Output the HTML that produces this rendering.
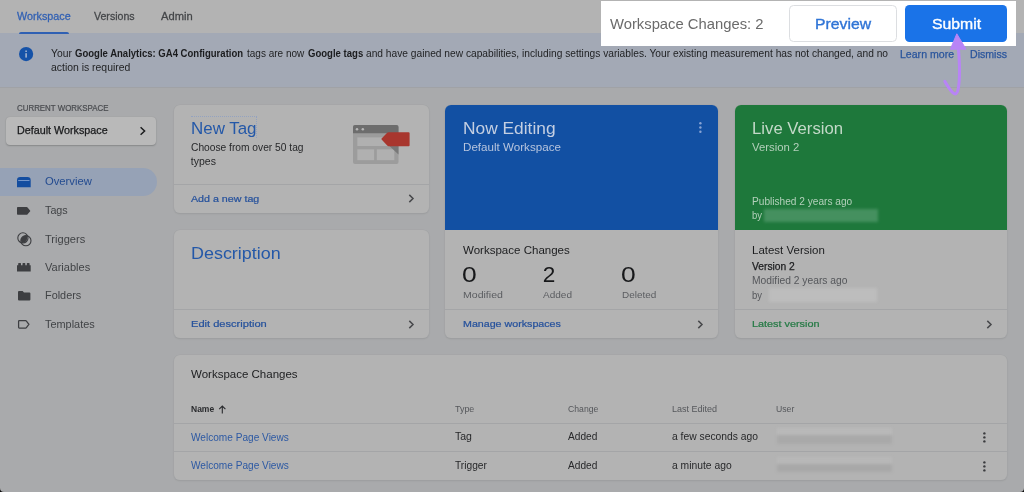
<!DOCTYPE html>
<html lang="en"><head><meta charset="utf-8"><title>Google Tag Manager</title>
<style>
*{box-sizing:border-box;margin:0;padding:0}
html,body{width:1024px;height:492px;overflow:hidden}
body{position:relative;background:#a9aaac;font-family:"Liberation Sans",Arial,sans-serif;-webkit-font-smoothing:antialiased}
.abs{position:absolute}
.t{position:absolute;white-space:nowrap;display:block;filter:blur(.3px);transform-origin:0 50%}
#topbar{left:0;top:0;width:1024px;height:33.5px;background:#b3b3b3}
#tabline{left:19px;top:31.5px;width:50px;height:2.2px;background:#2f60b3;border-radius:2px 2px 0 0}
#banner{left:0;top:33px;width:1024px;height:54.5px;background:#a3a9b5}
#bannerline{left:0;top:87px;width:1024px;height:1px;background:#a0a2a6}
.card{position:absolute;background:#b3b3b3;border-radius:6px;box-shadow:0 0 0 .6px #a3a4a6, 0 1px 1.5px rgba(60,64,67,.18)}
.hr{position:absolute;height:1px;background:#a4a5a7}
#wsbox{left:5.7px;top:116.8px;width:150.5px;height:28px;background:#b9b9b9;border-radius:4px;box-shadow:0 1px 1.5px rgba(40,42,45,.25),0 0 1px rgba(40,42,45,.15)}
#pill{left:0;top:167.5px;width:156.5px;height:28px;background:#96a2b6;border-radius:0 14px 14px 0}
#hl{left:600.8px;top:1.4px;width:415.2px;height:44.2px;background:#fff}
#pvbtn{left:788.9px;top:5.2px;width:107.9px;height:37px;background:#fff;border:1px solid #dcdee1;border-radius:4.5px}
#sbbtn{left:905px;top:4.9px;width:102px;height:37.4px;background:#1a73e8;border-radius:4.5px}
.blur{position:absolute;filter:blur(1.6px)}
svg{position:absolute;overflow:visible}

#t_ws{left:17px;top:10.34px;font-size:10.7px;line-height:13.9px;font-weight:400;color:#3160b3;transform:scaleX(1.0071);-webkit-text-stroke:0.26px #3160b3}
#t_ver{left:93.5px;top:10.34px;font-size:10.7px;line-height:13.9px;font-weight:400;color:#444649;transform:scaleX(0.9913);-webkit-text-stroke:0.26px #444649}
#t_adm{left:161px;top:10.34px;font-size:10.7px;line-height:13.9px;font-weight:400;color:#444649;transform:scaleX(1.0444);-webkit-text-stroke:0.26px #444649}
#b_lm{left:899.5px;top:47.55px;font-size:10.3px;line-height:13.4px;font-weight:400;color:#2a559c;transform:scaleX(1.0259);-webkit-text-stroke:0.25px #2a559c}
#b_dm{left:969.6px;top:47.55px;font-size:10.3px;line-height:13.4px;font-weight:400;color:#2a559c;transform:scaleX(1.0269);-webkit-text-stroke:0.25px #2a559c}
#b_s1{left:51.3px;top:47.15px;font-size:10.3px;line-height:13.4px;font-weight:400;color:#222325;transform:scaleX(1.0003)}
#b_s2{left:74.9px;top:47.15px;font-size:10.3px;line-height:13.4px;font-weight:700;color:#1b1c1e;transform:scaleX(0.9260)}
#b_s3{left:246.6px;top:47.15px;font-size:10.3px;line-height:13.4px;font-weight:400;color:#222325;transform:scaleX(0.9720)}
#b_s4{left:307.5px;top:47.15px;font-size:10.3px;line-height:13.4px;font-weight:700;color:#1b1c1e;transform:scaleX(0.9280)}
#b_s5{left:366.3px;top:47.15px;font-size:10.3px;line-height:13.4px;font-weight:400;color:#222325;transform:scaleX(0.9912)}
#b_l2{left:51.3px;top:61.35px;font-size:10.3px;line-height:13.4px;font-weight:400;color:#222325;transform:scaleX(1.0114)}
#s_cw{left:17px;top:103.22px;font-size:8.6px;line-height:11.2px;font-weight:400;color:#4a4c50;transform:scaleX(0.9199);-webkit-text-stroke:0.21px #4a4c50}
#s_dw{left:17px;top:123.83px;font-size:10.6px;line-height:13.8px;font-weight:400;color:#18191b;transform:scaleX(1.0148);-webkit-text-stroke:0.25px #18191b}
#n_ov{left:45.1px;top:175.31px;font-size:10.5px;line-height:13.7px;font-weight:400;color:#234b90;transform:scaleX(1.0700)}
#n_tg{left:44.9px;top:203.80px;font-size:10.5px;line-height:13.7px;font-weight:400;color:#414346;transform:scaleX(1.0245)}
#n_tr{left:44.9px;top:232.50px;font-size:10.5px;line-height:13.7px;font-weight:400;color:#414346;transform:scaleX(1.0552)}
#n_va{left:44.9px;top:260.60px;font-size:10.5px;line-height:13.7px;font-weight:400;color:#414346;transform:scaleX(1.0519)}
#n_fo{left:44.9px;top:289.15px;font-size:10.5px;line-height:13.7px;font-weight:400;color:#414346;transform:scaleX(1.0347)}
#n_te{left:44.9px;top:317.50px;font-size:10.5px;line-height:13.7px;font-weight:400;color:#414346;transform:scaleX(1.0391)}
#c1_t{left:190.5px;top:116.75px;font-size:17.2px;line-height:22.4px;font-weight:400;color:#2458a8;transform:scaleX(0.9845)}
#c1_a{left:190.8px;top:140.80px;font-size:10.5px;line-height:13.7px;font-weight:400;color:#27282a;transform:scaleX(0.9738)}
#c1_b{left:190.8px;top:154.90px;font-size:10.5px;line-height:13.7px;font-weight:400;color:#27282a;transform:scaleX(1.0000)}
#c1_l{left:190.8px;top:193.25px;font-size:9.5px;line-height:12.3px;font-weight:400;color:#27529c;transform:scaleX(1.1238);-webkit-text-stroke:0.23px #27529c}
#c2_t{left:190.6px;top:242.30px;font-size:17.3px;line-height:22.5px;font-weight:400;color:#2458a8;transform:scaleX(1.0380)}
#c2_l{left:190.8px;top:318.25px;font-size:9.5px;line-height:12.3px;font-weight:400;color:#27529c;transform:scaleX(1.1665);-webkit-text-stroke:0.23px #27529c}
#c3_t{left:463.0px;top:116.75px;font-size:17.2px;line-height:22.4px;font-weight:400;color:#c4cfe2;transform:scaleX(1.0089)}
#c3_s{left:463.1px;top:140.76px;font-size:10.2px;line-height:13.3px;font-weight:400;color:#b7c5de;transform:scaleX(1.1400)}
#c3_w{left:463.1px;top:241.75px;font-size:11.6px;line-height:15.1px;font-weight:400;color:#1c1d1f;transform:scaleX(0.9943)}
#c3_n0{left:462.4px;top:259.79px;font-size:22.6px;line-height:29.4px;font-weight:400;color:#17181a;transform:scaleX(1.1700)}
#c3_n1{left:542.8px;top:259.79px;font-size:22.6px;line-height:29.4px;font-weight:400;color:#17181a;transform:scaleX(1.0000)}
#c3_n2{left:621.2px;top:259.79px;font-size:22.6px;line-height:29.4px;font-weight:400;color:#17181a;transform:scaleX(1.1700)}
#c3_m{left:463.1px;top:289.19px;font-size:9.9px;line-height:12.9px;font-weight:400;color:#5b5d61;transform:scaleX(1.0687)}
#c3_a{left:542.8px;top:289.19px;font-size:9.9px;line-height:12.9px;font-weight:400;color:#5b5d61;transform:scaleX(1.0151)}
#c3_d{left:621.9px;top:289.19px;font-size:9.9px;line-height:12.9px;font-weight:400;color:#5b5d61;transform:scaleX(1.0073)}
#c3_l{left:463.1px;top:318.00px;font-size:9.5px;line-height:12.3px;font-weight:400;color:#27529c;transform:scaleX(1.1231);-webkit-text-stroke:0.23px #27529c}
#c4_t{left:752.0px;top:116.75px;font-size:17.2px;line-height:22.4px;font-weight:400;color:#c3d9c8;transform:scaleX(0.9732)}
#c4_s{left:752.1px;top:140.81px;font-size:10.2px;line-height:13.3px;font-weight:400;color:#b4d0bb;transform:scaleX(1.1113)}
#c4_p{left:752.1px;top:195.15px;font-size:10.3px;line-height:13.4px;font-weight:400;color:#b4d0bb;transform:scaleX(0.9834)}
#c4_b{left:752.1px;top:209.25px;font-size:10.3px;line-height:13.4px;font-weight:400;color:#b4d0bb;transform:scaleX(0.9199)}
#c4_lv{left:752.1px;top:241.75px;font-size:11.6px;line-height:15.1px;font-weight:400;color:#1c1d1f;transform:scaleX(0.9906)}
#c4_v2{left:752.1px;top:260.15px;font-size:10.3px;line-height:13.4px;font-weight:400;color:#1c1d1f;transform:scaleX(0.9972);-webkit-text-stroke:0.25px #1c1d1f}
#c4_m{left:752.1px;top:274.00px;font-size:10.3px;line-height:13.4px;font-weight:400;color:#55575b;transform:scaleX(0.9992)}
#c4_b2{left:752.1px;top:288.60px;font-size:10.3px;line-height:13.4px;font-weight:400;color:#55575b;transform:scaleX(0.9199)}
#c4_l{left:752.1px;top:318.00px;font-size:9.5px;line-height:12.3px;font-weight:400;color:#257a45;transform:scaleX(1.1405);-webkit-text-stroke:0.23px #257a45}
#tb_t{left:190.8px;top:368.21px;font-size:10.4px;line-height:13.5px;font-weight:400;color:#1c1d1f;transform:scaleX(1.1076)}
#th_n{left:190.8px;top:403.76px;font-size:8.7px;line-height:11.3px;font-weight:700;color:#2a2b2e;transform:scaleX(0.9768)}
#th_t{left:455.2px;top:403.76px;font-size:8.7px;line-height:11.3px;font-weight:400;color:#55575b;transform:scaleX(1.0254)}
#th_c{left:567.5px;top:403.76px;font-size:8.7px;line-height:11.3px;font-weight:400;color:#55575b;transform:scaleX(0.9962)}
#th_l{left:671.5px;top:403.76px;font-size:8.7px;line-height:11.3px;font-weight:400;color:#55575b;transform:scaleX(1.0357)}
#th_u{left:775.9px;top:403.76px;font-size:8.7px;line-height:11.3px;font-weight:400;color:#55575b;transform:scaleX(0.9988)}
#r1_n{left:190.8px;top:431.05px;font-size:10.5px;line-height:13.7px;font-weight:400;color:#2d59a3;transform:scaleX(0.9615)}
#r1_t{left:455.2px;top:430.25px;font-size:10.5px;line-height:13.7px;font-weight:400;color:#27282a;transform:scaleX(0.9996)}
#r1_c{left:567.5px;top:430.25px;font-size:10.5px;line-height:13.7px;font-weight:400;color:#27282a;transform:scaleX(0.9656)}
#r1_l{left:671.5px;top:430.25px;font-size:10.5px;line-height:13.7px;font-weight:400;color:#27282a;transform:scaleX(0.9814)}
#r2_n{left:190.8px;top:459.45px;font-size:10.5px;line-height:13.7px;font-weight:400;color:#2d59a3;transform:scaleX(0.9615)}
#r2_t{left:455.2px;top:459.35px;font-size:10.5px;line-height:13.7px;font-weight:400;color:#27282a;transform:scaleX(0.9713)}
#r2_c{left:567.5px;top:459.35px;font-size:10.5px;line-height:13.7px;font-weight:400;color:#27282a;transform:scaleX(0.9656)}
#r2_l{left:671.5px;top:459.35px;font-size:10.5px;line-height:13.7px;font-weight:400;color:#27282a;transform:scaleX(0.9821)}
#h_wc{left:610.4px;top:14.65px;font-size:14.5px;line-height:18.9px;font-weight:400;color:#6b6b6b;transform:scaleX(1.0201)}
#h_pv{left:815.3px;top:14.90px;font-size:14px;line-height:18.2px;font-weight:400;color:#2f74d6;transform:scaleX(1.1254);-webkit-text-stroke:0.34px #2f74d6}
#h_sb{left:931.8px;top:14.90px;font-size:14px;line-height:18.2px;font-weight:400;color:#ffffff;transform:scaleX(1.1276);-webkit-text-stroke:0.34px #ffffff}
</style></head>
<body>
<div class="abs" id="topbar"></div>
<div class="abs" id="banner"></div>
<div class="abs" id="bannerline"></div>
<div class="abs" id="tabline"></div>

<!-- info icon -->
<svg style="left:18.5px;top:46.7px" width="14.2" height="14.2" viewBox="0 0 14.2 14.2"><circle cx="7.1" cy="7.1" r="7.1" fill="#1552a8"/><rect x="6.4" y="6.2" width="1.4" height="4.4" fill="#b4bfd4"/><rect x="6.4" y="3.5" width="1.4" height="1.5" fill="#b4bfd4"/></svg>

<!-- sidebar -->
<div class="abs" id="wsbox"></div>
<svg style="left:139px;top:125.5px" width="8" height="10" viewBox="0 0 8 10"><path d="M1.6 1.2 L5.6 5 L1.6 8.8" fill="none" stroke="#1b1c1e" stroke-width="1.5"/></svg>
<div class="abs" id="pill"></div>
<!-- overview icon -->
<svg style="left:17.1px;top:176.8px" width="14" height="11" viewBox="0 0 14 11"><path d="M0 10.3 V3.2 Q0 0 3.2 0 H10.5 Q13.7 0 13.7 3.2 V10.3 Z" fill="#134da0"/><rect x="1.2" y="3.1" width="11.3" height="0.9" fill="#7f9fd0"/></svg>
<!-- tags icon -->
<svg style="left:17.1px;top:206.6px" width="14" height="8" viewBox="0 0 14 8"><path d="M0.8 0 H9.6 Q10.2 0 10.6 .5 L13.4 3.9 L10.6 7.3 Q10.2 7.8 9.6 7.8 H0.8 Q0 7.8 0 7 V.8 Q0 0 .8 0 Z" fill="#3d3e41"/></svg>
<!-- triggers icon -->
<svg style="left:16.9px;top:231.6px" width="15" height="15" viewBox="0 0 15 15"><circle cx="5.9" cy="5.9" r="5.1" fill="none" stroke="#3d3e41" stroke-width="1.1"/><circle cx="8.9" cy="8.7" r="5.1" fill="none" stroke="#3d3e41" stroke-width="1.1"/><path d="M3.9 7.6 A5.1 5.1 0 0 1 9.9 3.7 A5.1 5.1 0 0 1 4.9 11 A5 5 0 0 1 3.9 7.6Z" fill="#3d3e41"/></svg>
<!-- variables icon -->
<svg style="left:17.1px;top:263.2px" width="14" height="9" viewBox="0 0 14 9"><path d="M0 8.5 V2.2 H1.2 V.6 Q1.2 0 1.8 0 H3.4 Q4 0 4 .6 V2.2 H5.5 V.6 Q5.5 0 6.1 0 H7.7 Q8.3 0 8.3 .6 V2.2 H9.8 V.6 Q9.8 0 10.4 0 H12 Q12.6 0 12.6 .6 V2.2 H13.7 V8.5 Z" fill="#3d3e41"/></svg>
<!-- folders icon -->
<svg style="left:17.7px;top:291px" width="13" height="10" viewBox="0 0 13 10"><path d="M1 0 H4.6 L6 1.4 H11.4 Q12.4 1.4 12.4 2.4 V8.4 Q12.4 9.4 11.4 9.4 H1 Q0 9.4 0 8.4 V1 Q0 0 1 0Z" fill="#3d3e41"/></svg>
<!-- templates icon -->
<svg style="left:18.3px;top:320.2px" width="12" height="9" viewBox="0 0 12 9"><path d="M1.3 .6 H7.6 Q8.1 .6 8.4 1 L10.9 4.3 L8.4 7.6 Q8.1 8 7.6 8 H1.3 Q.6 8 .6 7.3 V1.3 Q.6 .6 1.3 .6Z" fill="none" stroke="#3d3e41" stroke-width="1.25"/></svg>

<!-- cards -->
<div class="card" style="left:173.8px;top:105px;width:254.8px;height:108.4px"></div>
<div class="hr" style="left:173.8px;top:184px;width:254.8px"></div>
<div class="card" style="left:173.8px;top:230.4px;width:254.8px;height:107.8px"></div>
<div class="hr" style="left:173.8px;top:309px;width:254.8px"></div>

<div class="card" style="left:445.2px;top:104.8px;width:273px;height:233.4px"></div>
<div class="abs" style="left:445.2px;top:104.8px;width:273px;height:125px;background:#1250a3;border-radius:6px 6px 0 0"></div>
<div class="hr" style="left:445.2px;top:309px;width:273px"></div>

<div class="card" style="left:735.1px;top:104.8px;width:272px;height:233.4px"></div>
<div class="abs" style="left:735.1px;top:104.8px;width:272px;height:125px;background:#1e783b;border-radius:6px 6px 0 0"></div>
<div class="hr" style="left:735.1px;top:309px;width:272px"></div>

<div class="card" style="left:173.8px;top:354.6px;width:833.3px;height:125.6px"></div>
<div class="hr" style="left:173.8px;top:423px;width:833.3px"></div>
<div class="hr" style="left:173.8px;top:451.2px;width:833.3px"></div>

<!-- focus outline on New Tag -->
<div class="abs" style="left:190.6px;top:115.5px;width:66.4px;height:22px;border-top:1px dotted #93a2c0;border-right:1px dotted #93a2c0"></div>

<!-- new tag illustration -->
<svg style="left:353.3px;top:124.9px" width="58" height="40" viewBox="0 0 58 40">
 <rect x="0" y="0" width="45.5" height="39" rx="2" fill="#9c9c9c"/>
 <path d="M0 8.3 V2 Q0 0 2 0 H43.5 Q45.5 0 45.5 2 V8.3Z" fill="#6d6d6d"/>
 <circle cx="4" cy="4.2" r="1.25" fill="#b7b7b7"/><circle cx="9.8" cy="4.2" r="1.25" fill="#b7b7b7"/>
 <rect x="4.3" y="12.4" width="37" height="8.6" fill="#b0b0b0"/>
 <rect x="4.3" y="24.3" width="16.8" height="10.9" fill="#b0b0b0"/>
 <rect x="23.8" y="24.3" width="17.5" height="10.9" fill="#b0b0b0"/>
 <path d="M29 14 L45.5 29.6 V8.3 H35 Z" fill="#787878"/>
 <path d="M28.6 13.4 Q28.2 14 28.6 14.6 L34.2 20.6 Q34.8 21.2 35.6 21.2 H55.6 Q56.6 21.2 56.6 20.2 V8.2 Q56.6 7.2 55.6 7.2 H35.6 Q34.8 7.2 34.2 7.8 Z" fill="#a8362e"/>
</svg>

<!-- chevrons -->
<svg style="left:407.6px;top:194.2px" width="7" height="9" viewBox="0 0 7 9"><path d="M1.3 .9 L5 4.5 L1.3 8.1" fill="none" stroke="#48494c" stroke-width="1.5"/></svg>
<svg style="left:407.6px;top:319.6px" width="7" height="9" viewBox="0 0 7 9"><path d="M1.3 .9 L5 4.5 L1.3 8.1" fill="none" stroke="#48494c" stroke-width="1.5"/></svg>
<svg style="left:696.8px;top:319.6px" width="7" height="9" viewBox="0 0 7 9"><path d="M1.3 .9 L5 4.5 L1.3 8.1" fill="none" stroke="#48494c" stroke-width="1.5"/></svg>
<svg style="left:985.8px;top:319.6px" width="7" height="9" viewBox="0 0 7 9"><path d="M1.3 .9 L5 4.5 L1.3 8.1" fill="none" stroke="#48494c" stroke-width="1.5"/></svg>

<!-- kebab in Now Editing -->
<svg style="left:699.1px;top:121.5px" width="3" height="12" viewBox="0 0 3 12"><circle cx="1.4" cy="1.3" r="1.2" fill="#89a4d4"/><circle cx="1.4" cy="5.5" r="1.2" fill="#89a4d4"/><circle cx="1.4" cy="9.7" r="1.2" fill="#89a4d4"/></svg>
<!-- kebabs table -->
<svg style="left:983.4px;top:432.4px" width="3" height="11" viewBox="0 0 3 11"><circle cx="1.4" cy="1.4" r="1.2" fill="#3a3b3e"/><circle cx="1.4" cy="5.4" r="1.2" fill="#3a3b3e"/><circle cx="1.4" cy="9.4" r="1.2" fill="#3a3b3e"/></svg>
<svg style="left:983.4px;top:460.8px" width="3" height="11" viewBox="0 0 3 11"><circle cx="1.4" cy="1.4" r="1.2" fill="#3a3b3e"/><circle cx="1.4" cy="5.4" r="1.2" fill="#3a3b3e"/><circle cx="1.4" cy="9.4" r="1.2" fill="#3a3b3e"/></svg>

<!-- sort arrow -->
<svg style="left:217.6px;top:404.6px" width="9" height="9" viewBox="0 0 9 9"><path d="M4.3 8.4 V1.2 M1.2 4.2 L4.3 1.1 L7.4 4.2" fill="none" stroke="#2a2b2e" stroke-width="1.1"/></svg>

<!-- blurred redactions -->
<div class="blur" style="left:764px;top:208.6px;width:114px;height:13.4px;background:#45905f"></div>
<div class="blur" style="left:768.5px;top:288px;width:108px;height:14px;background:#bdbdbd"></div>
<div class="blur" style="left:777px;top:428.4px;width:115px;height:15.6px;background:linear-gradient(#b9b9b9 0 45%,#a9a9a9 45% 100%)"></div>
<div class="blur" style="left:777px;top:457.4px;width:115px;height:14.6px;background:linear-gradient(#b8b8b8 0 45%,#a8a8a8 45% 100%)"></div>

<!-- highlight -->
<div class="abs" id="hl"></div>
<div class="abs" id="pvbtn"></div>
<div class="abs" id="sbbtn"></div>

<!-- arrow -->
<svg style="left:925px;top:25px" width="70" height="80" viewBox="0 0 70 80">
 <path d="M33.2 21 C34.4 34 35.4 52 33.2 64 C32.4 68.4 30.6 70 28.4 68.2 C25 65.4 22.4 60.6 19.8 56.4" fill="none" stroke="#b884f6" stroke-width="3" stroke-linecap="round" stroke-linejoin="round"/>
 <path d="M31.8 8.8 L41 24.2 H25.4 Z" fill="#b884f6" stroke="#b884f6" stroke-width="1" stroke-linejoin="round"/>
</svg>

<!-- screenshot corner marks -->
<svg style="left:0;top:488px" width="4" height="4" viewBox="0 0 4 4"><path d="M0 0 V4 H4 Q0 4 0 0Z" fill="#0a0a0a"/></svg>
<svg style="left:1020px;top:488px" width="4" height="4" viewBox="0 0 4 4"><path d="M4 0 V4 H0 Q4 4 4 0Z" fill="#0a0a0a"/></svg>

<span class="t" id="t_ws">Workspace</span>
<span class="t" id="t_ver">Versions</span>
<span class="t" id="t_adm">Admin</span>
<span class="t" id="b_lm">Learn more</span>
<span class="t" id="b_dm">Dismiss</span>
<span class="t" id="b_s1">Your</span>
<span class="t" id="b_s2"><b>Google Analytics: GA4 Configuration</b></span>
<span class="t" id="b_s3">tags are now</span>
<span class="t" id="b_s4"><b>Google tags</b></span>
<span class="t" id="b_s5">and have gained new capabilities, including settings variables. Your existing measurement has not changed, and no</span>
<span class="t" id="b_l2">action is required</span>
<span class="t" id="s_cw">CURRENT WORKSPACE</span>
<span class="t" id="s_dw">Default Workspace</span>
<span class="t" id="n_ov">Overview</span>
<span class="t" id="n_tg">Tags</span>
<span class="t" id="n_tr">Triggers</span>
<span class="t" id="n_va">Variables</span>
<span class="t" id="n_fo">Folders</span>
<span class="t" id="n_te">Templates</span>
<span class="t" id="c1_t">New Tag</span>
<span class="t" id="c1_a">Choose from over 50 tag</span>
<span class="t" id="c1_b">types</span>
<span class="t" id="c1_l">Add a new tag</span>
<span class="t" id="c2_t">Description</span>
<span class="t" id="c2_l">Edit description</span>
<span class="t" id="c3_t">Now Editing</span>
<span class="t" id="c3_s">Default Workspace</span>
<span class="t" id="c3_w">Workspace Changes</span>
<span class="t" id="c3_n0">0</span>
<span class="t" id="c3_n1">2</span>
<span class="t" id="c3_n2">0</span>
<span class="t" id="c3_m">Modified</span>
<span class="t" id="c3_a">Added</span>
<span class="t" id="c3_d">Deleted</span>
<span class="t" id="c3_l">Manage workspaces</span>
<span class="t" id="c4_t">Live Version</span>
<span class="t" id="c4_s">Version 2</span>
<span class="t" id="c4_p">Published 2 years ago</span>
<span class="t" id="c4_b">by</span>
<span class="t" id="c4_lv">Latest Version</span>
<span class="t" id="c4_v2">Version 2</span>
<span class="t" id="c4_m">Modified 2 years ago</span>
<span class="t" id="c4_b2">by</span>
<span class="t" id="c4_l">Latest version</span>
<span class="t" id="tb_t">Workspace Changes</span>
<span class="t" id="th_n">Name</span>
<span class="t" id="th_t">Type</span>
<span class="t" id="th_c">Change</span>
<span class="t" id="th_l">Last Edited</span>
<span class="t" id="th_u">User</span>
<span class="t" id="r1_n">Welcome Page Views</span>
<span class="t" id="r1_t">Tag</span>
<span class="t" id="r1_c">Added</span>
<span class="t" id="r1_l">a few seconds ago</span>
<span class="t" id="r2_n">Welcome Page Views</span>
<span class="t" id="r2_t">Trigger</span>
<span class="t" id="r2_c">Added</span>
<span class="t" id="r2_l">a minute ago</span>
<span class="t" id="h_wc">Workspace Changes: 2</span>
<span class="t" id="h_pv">Preview</span>
<span class="t" id="h_sb">Submit</span>
</body></html>
